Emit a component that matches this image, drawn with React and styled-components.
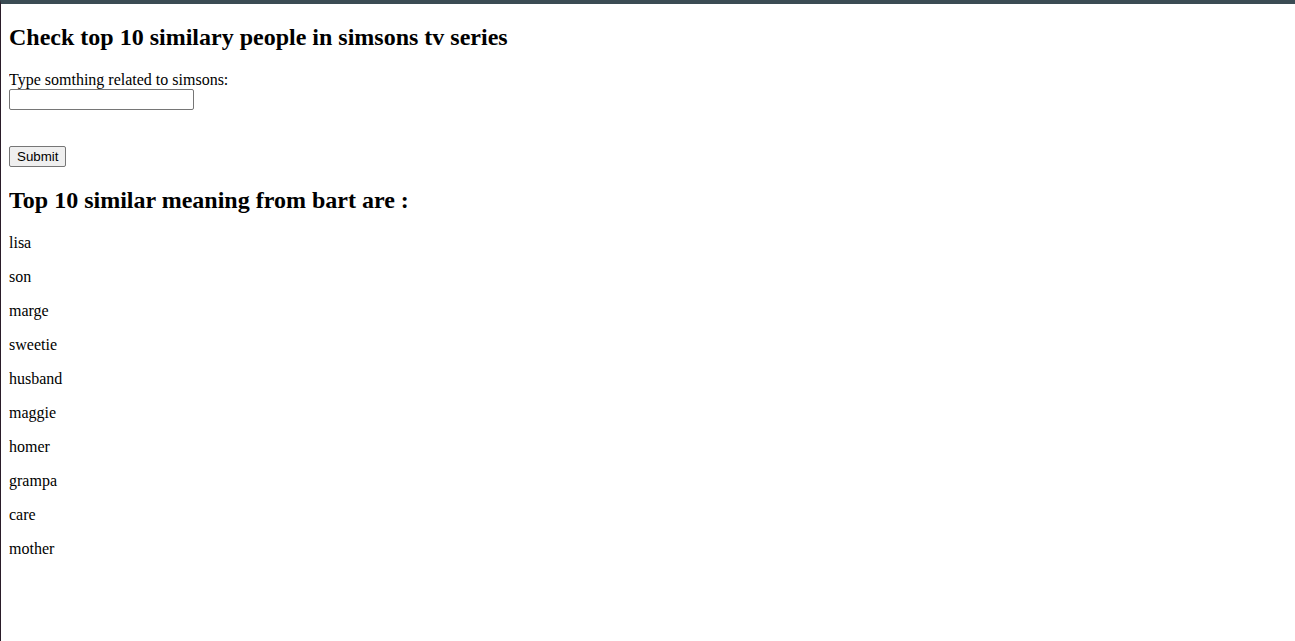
import React, { useState } from "react";
import styled, { createGlobalStyle } from "styled-components";

const GlobalStyle = createGlobalStyle`
  html {
    border-top: 4px solid #3b4c54;
    border-left: 1px solid #2a1c29;
    min-height: 100%;
    box-sizing: border-box;
    background: #fff;
  }
  body {
    margin: 0 8px 8px;
    font-family: "Liberation Serif", "Times New Roman", serif;
    font-size: 16px;
    color: #000;
  }
`;

const Page = styled.div``;

const Heading = styled.h2`
  font-size: 1.5em;
  font-weight: bold;
  margin: 0.83em 0;
`;

const Form = styled.form``;

const Label = styled.label``;

const TextInput = styled.input`
  font-family: "Liberation Sans", Arial, sans-serif;
  font-size: 13.33px;
  width: 185px;
  height: 21px;
  box-sizing: border-box;
  border: 1px solid #767676;
  border-radius: 2px;
  padding: 1px 2px;
  margin: 0;
`;

const SubmitButton = styled.button`
  font-family: "Liberation Sans", Arial, sans-serif;
  font-size: 13.33px;
  background: #efefef;
  border: 1px solid #767676;
  border-radius: 2px;
  padding: 1px 7px;
  height: 21px;
  margin: 0;
  color: #000;
`;

const Word = styled.p`
  margin: 1em 0;
`;

const words = [
  "lisa",
  "son",
  "marge",
  "sweetie",
  "husband",
  "maggie",
  "homer",
  "grampa",
  "care",
  "mother",
];

export default function App() {
  const [query, setQuery] = useState("");

  const submitHandler = (e) => {
    e.preventDefault();
  };

  return (
    <Page>
      <GlobalStyle />
      <Heading>Check top 10 similary people in simsons tv series</Heading>
      <Form onSubmit={submitHandler}>
        <Label htmlFor="word">Type somthing related to simsons:</Label>
        <br />
        <TextInput
          id="word"
          type="text"
          value={query}
          onChange={(e) => setQuery(e.target.value)}
        />
        <br />
        <br />
        <br />
        <SubmitButton type="submit">Submit</SubmitButton>
      </Form>
      <Heading>Top 10 similar meaning from bart are :</Heading>
      {words.map((w) => (
        <Word key={w}>{w}</Word>
      ))}
    </Page>
  );
}
